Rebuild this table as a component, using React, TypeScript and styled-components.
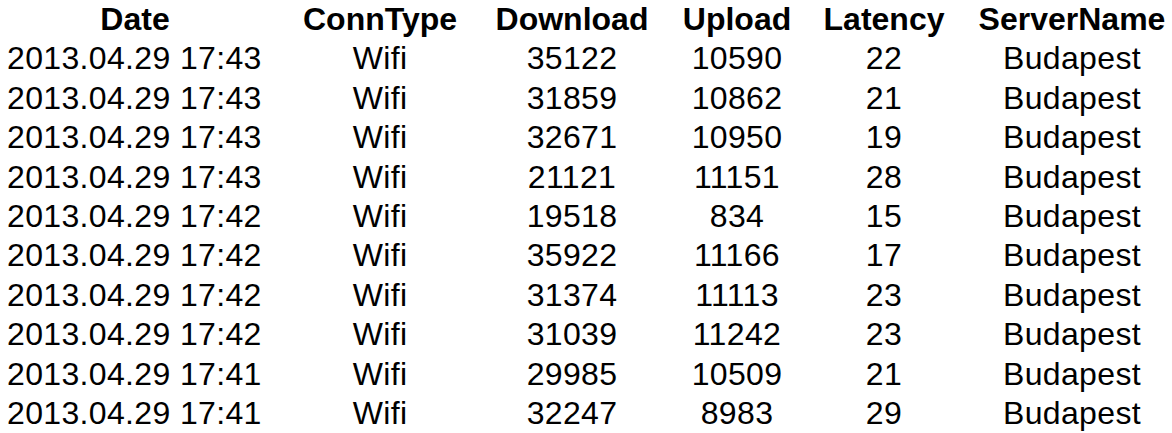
import React from 'react';
import styled, { createGlobalStyle } from "styled-components";

type RowType = {
    date: string;
    conn: string;
    down: number;
    up: number;
    latency: number;
    server: string;
}

const rows: RowType[] = [
    { date: "2013.04.29 17:43", conn: "Wifi", down: 35122, up: 10590, latency: 22, server: "Budapest" },
    { date: "2013.04.29 17:43", conn: "Wifi", down: 31859, up: 10862, latency: 21, server: "Budapest" },
    { date: "2013.04.29 17:43", conn: "Wifi", down: 32671, up: 10950, latency: 19, server: "Budapest" },
    { date: "2013.04.29 17:43", conn: "Wifi", down: 21121, up: 11151, latency: 28, server: "Budapest" },
    { date: "2013.04.29 17:42", conn: "Wifi", down: 19518, up: 834, latency: 15, server: "Budapest" },
    { date: "2013.04.29 17:42", conn: "Wifi", down: 35922, up: 11166, latency: 17, server: "Budapest" },
    { date: "2013.04.29 17:42", conn: "Wifi", down: 31374, up: 11113, latency: 23, server: "Budapest" },
    { date: "2013.04.29 17:42", conn: "Wifi", down: 31039, up: 11242, latency: 23, server: "Budapest" },
    { date: "2013.04.29 17:41", conn: "Wifi", down: 29985, up: 10509, latency: 21, server: "Budapest" },
    { date: "2013.04.29 17:41", conn: "Wifi", down: 32247, up: 8983, latency: 29, server: "Budapest" },
];

const headers = ["Date", "ConnType", "Download", "Upload", "Latency", "ServerName"];

const App = () => {
    return (
        <>
            <GlobalStyle/>
            <Sheet>
                <Row>
                    {headers.map(h => <HeadCell key={h}>{h}</HeadCell>)}
                </Row>
                {rows.map((r, i) => (
                    <Row key={i}>
                        <Cell $left>{r.date}</Cell>
                        <Cell>{r.conn}</Cell>
                        <Cell>{r.down}</Cell>
                        <Cell>{r.up}</Cell>
                        <Cell>{r.latency}</Cell>
                        <Cell>{r.server}</Cell>
                    </Row>
                ))}
            </Sheet>
        </>
    );
};

export default App;

const GlobalStyle = createGlobalStyle`
  html, body {
    margin: 0;
    padding: 0;
    background: #fff;
    overflow: hidden;
  }
`

const Sheet = styled.div`
  padding-left: 7px;
  font-family: "Liberation Sans", Arial, sans-serif;
  font-size: 32px;
  color: #000;
`

const Row = styled.div`
  display: grid;
  grid-template-columns: 256px 234px 150px 180px 114px 262px;
  height: 39.4px;
  line-height: 39.4px;
`

const Cell = styled.div<{ $left?: boolean }>`
  display: flex;
  justify-content: ${p => p.$left ? "flex-start" : "center"};
  white-space: nowrap;
  letter-spacing: 0.35px;
`

const HeadCell = styled.div`
  display: flex;
  justify-content: center;
  white-space: nowrap;
  font-weight: bold;
`
